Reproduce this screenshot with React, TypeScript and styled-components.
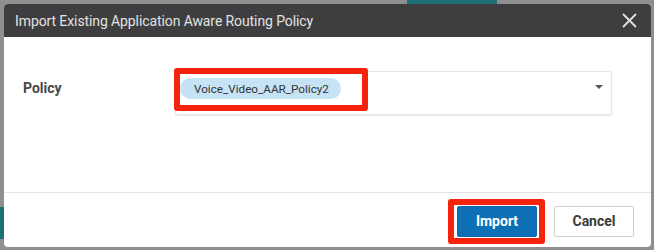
import React from "react"
import styled, { createGlobalStyle } from "styled-components"

const GlobalStyle = createGlobalStyle`
  html, body {
    margin: 0;
    padding: 0;
    background: #8f8f8f;
  }
  * {
    box-sizing: border-box;
  }
`

const Backdrop = styled.div`
  position: relative;
  width: 654px;
  height: 250px;
  padding: 4px 3px 3px 4px;
  background: #8f8f8f;
  font-family: Roboto, "Liberation Sans", sans-serif;
  overflow: hidden;
`

const PageBit = styled.div<{ $left: number; $top: number; $w: number; $h: number }>`
  position: absolute;
  left: ${(p) => p.$left}px;
  top: ${(p) => p.$top}px;
  width: ${(p) => p.$w}px;
  height: ${(p) => p.$h}px;
  background: #1f6f78;
`

const Modal = styled.div`
  position: relative;
  width: 647px;
  height: 243px;
  display: flex;
  flex-direction: column;
  background: #fff;
  border-radius: 4px;
  overflow: hidden;
`

const Header = styled.div`
  height: 33px;
  flex: none;
  display: flex;
  align-items: center;
  justify-content: space-between;
  padding: 0 14px 0 11px;
  background: #3e3e40;
`

const Title = styled.div`
  color: #e2e2e2;
  font-size: 14px;
  font-weight: 400;
  letter-spacing: -0.1px;
`

const CloseButton = styled.button`
  width: 16px;
  height: 16px;
  padding: 0;
  border: 0;
  background: transparent;
  display: flex;
  align-items: center;
  justify-content: center;
  cursor: pointer;
`

const Body = styled.div`
  flex: 1;
  display: flex;
  align-items: flex-start;
  padding: 34px 39px 0 19px;
`

const Label = styled.div`
  width: 152px;
  flex: none;
  padding-top: 9px;
  color: #474747;
  font-size: 14px;
  font-weight: 700;
`

const SelectBox = styled.div`
  position: relative;
  flex: 1;
  height: 44px;
  display: flex;
  align-items: flex-start;
  padding: 6px 0 0 4px;
  border: 1px solid #e6e6e6;
  border-radius: 2px;
  box-shadow: 0 1px 2px rgba(0, 0, 0, 0.08);
`

const Chip = styled.span`
  display: inline-flex;
  align-items: center;
  height: 21px;
  padding: 0 12px 0 14px;
  border-radius: 11px;
  background: #c6e3f5;
  color: #333;
  font-size: 11.7px;
`

const Caret = styled.span`
  position: absolute;
  right: 8px;
  top: 13px;
  width: 0;
  height: 0;
  border-left: 4px solid transparent;
  border-right: 4px solid transparent;
  border-top: 4px solid #555;
`

const Highlight = styled.div<{ $left: number; $top: number; $w: number; $h: number }>`
  position: absolute;
  left: ${(p) => p.$left}px;
  top: ${(p) => p.$top}px;
  width: ${(p) => p.$w}px;
  height: ${(p) => p.$h}px;
  border: 6px solid #f5230b;
  border-radius: 3px;
  pointer-events: none;
`

const Footer = styled.div`
  height: 55px;
  flex: none;
  display: flex;
  align-items: center;
  justify-content: flex-end;
  gap: 17px;
  padding: 2px 17px 0 0;
  border-top: 1px solid #e4e4e4;
`

const ButtonWrap = styled.div`
  position: relative;
`

const Button = styled.button<{ $primary?: boolean }>`
  width: 80px;
  height: 31px;
  border-radius: 2px;
  font-family: Roboto, "Liberation Sans", sans-serif;
  font-size: 14px;
  font-weight: 700;
  cursor: pointer;
  border: 1px solid ${(p) => (p.$primary ? "#0b6aae" : "#cfcfcf")};
  background: ${(p) => (p.$primary ? "#0d70b6" : "#fff")};
  color: ${(p) => (p.$primary ? "#fff" : "#3a3a3a")};
`

export default function App() {
  return (
    <>
      <GlobalStyle />
      <Backdrop>
        <PageBit $left={407} $top={0} $w={90} $h={4} />
        <PageBit $left={0} $top={207} $w={4} $h={32} />
        <Modal>
          <Header>
            <Title>Import Existing Application Aware Routing Policy</Title>
            <CloseButton aria-label="Close">
              <svg width="15" height="15" viewBox="0 0 15 15">
                <path d="M1 1 L14 14 M14 1 L1 14" stroke="#e2e2e2" strokeWidth="1.8" />
              </svg>
            </CloseButton>
          </Header>
          <Body>
            <Label>Policy</Label>
            <SelectBox>
              <Chip>Voice_Video_AAR_Policy2</Chip>
              <Caret />
              <Highlight $left={-2} $top={-4} $w={194} $h={43} />
            </SelectBox>
          </Body>
          <Footer>
            <ButtonWrap>
              <Button $primary>Import</Button>
              <Highlight $left={-9} $top={-7} $w={97} $h={45} />
            </ButtonWrap>
            <Button>Cancel</Button>
          </Footer>
        </Modal>
      </Backdrop>
    </>
  )
}
